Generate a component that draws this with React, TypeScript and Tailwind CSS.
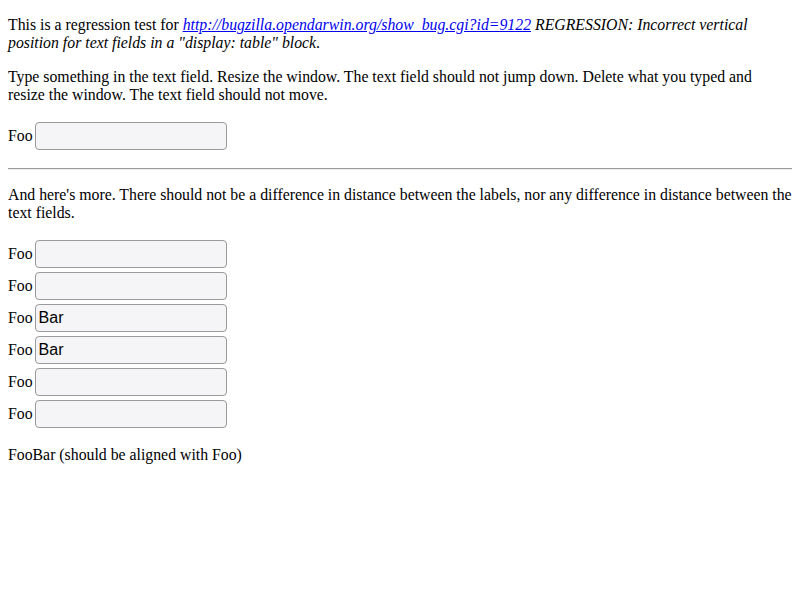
import React from "react";

function Field({ value }: { value?: string }) {
  return (
    <div className="leading-[18px]">
      Foo
      <input
        type="text"
        defaultValue={value}
        className="inline-block align-baseline my-[2px] ml-[2px] w-[192px] h-[28px] rounded-[4px] border border-[#9a9a9a] bg-[#f5f5f7] px-[3px] text-[16px] text-black outline-none"
        style={{ fontFamily: '"Liberation Sans", Arial, sans-serif' }}
      />
    </div>
  );
}

export default function App() {
  return (
    <div
      className="m-[8px] text-[15.8px] leading-[18px] text-black"
      style={{ fontFamily: '"Liberation Serif", "Times New Roman", serif' }}
    >
      <p className="my-[16px]">
        This is a regression test for{" "}
        <a
          href="#"
          className="text-[#0000ee] underline italic"
        >
          http://bugzilla.opendarwin.org/show_bug.cgi?id=9122
        </a>{" "}
        <i>
          REGRESSION: Incorrect vertical position for text fields in a "display:
          table" block
        </i>
        .
      </p>
      <p className="my-[16px]">
        Type something in the text field. Resize the window. The text field
        should not jump down. Delete what you typed and resize the window. The
        text field should not move.
      </p>
      <div className="my-[16px]">
        <Field />
      </div>
      <hr className="my-[8px] border-t border-b border-t-[#9a9a9a] border-b-[#eeeeee] h-0" />
      <p className="my-[16px]">
        And here's more. There should not be a difference in distance between
        the labels, nor any difference in distance between the text fields.
      </p>
      <div className="my-[16px]">
        <Field />
        <Field />
        <Field value="Bar" />
        <Field value="Bar" />
        <Field />
        <Field />
      </div>
      <p className="my-[16px]">FooBar (should be aligned with Foo)</p>
    </div>
  );
}
